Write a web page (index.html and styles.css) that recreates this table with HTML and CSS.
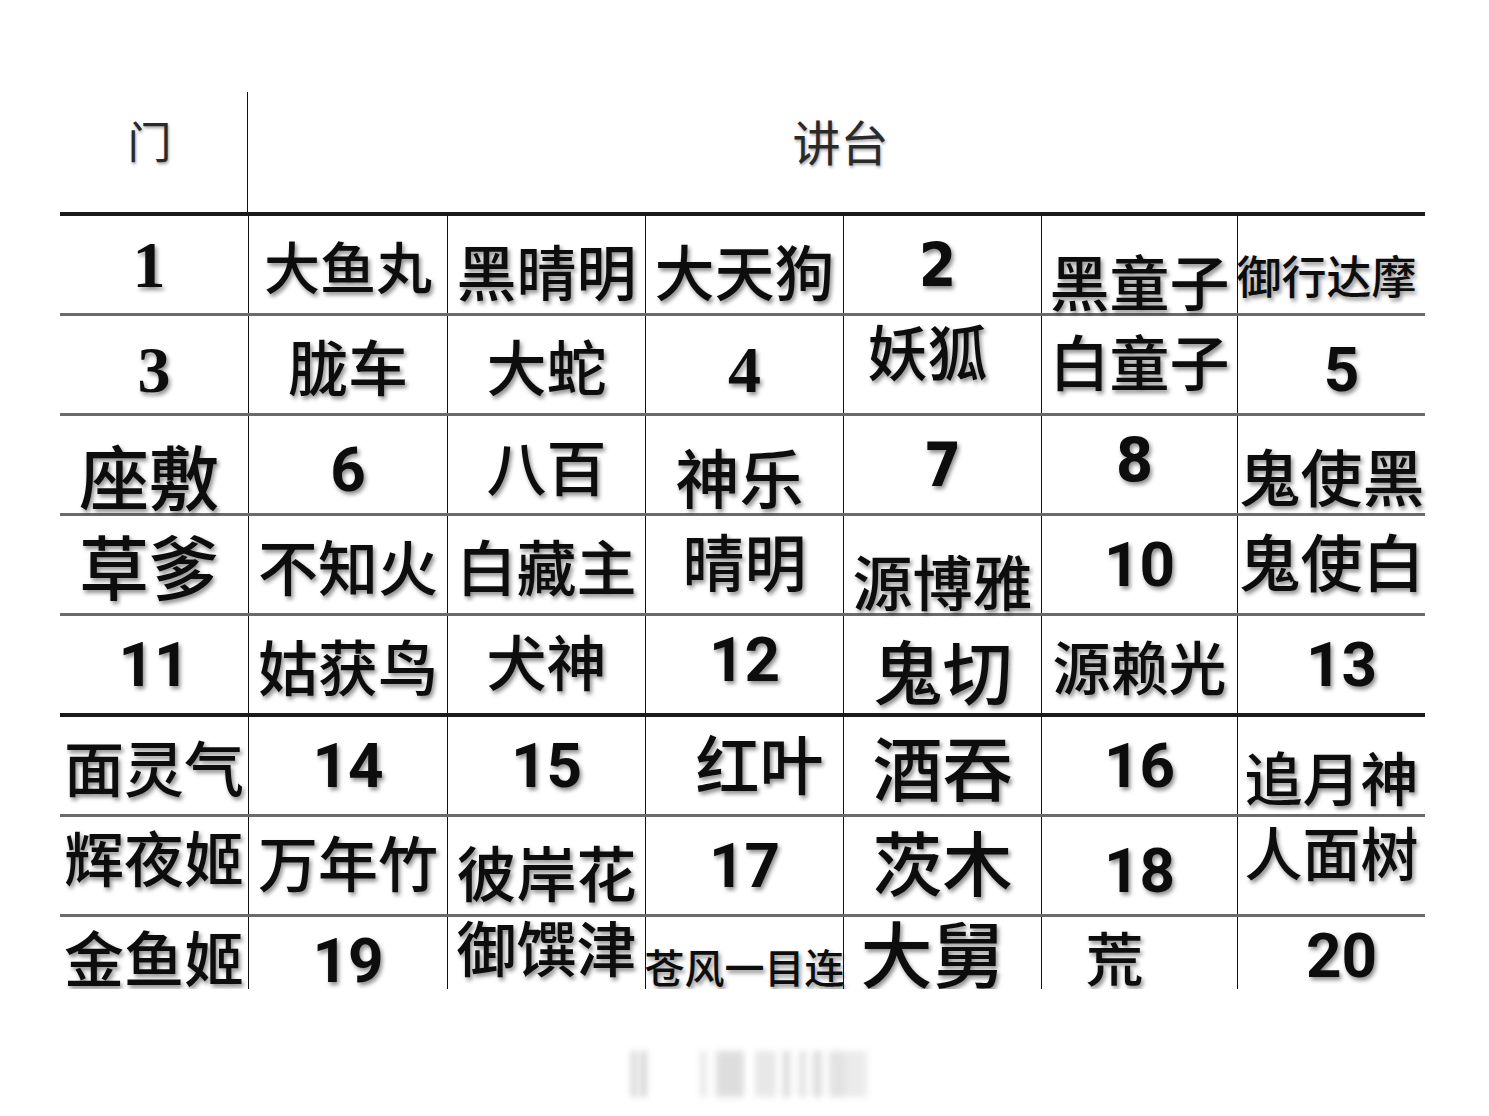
FILE: index.html
```html
<!DOCTYPE html>
<html lang="zh-CN">
<head>
<meta charset="utf-8">
<title>座位表</title>
<link rel="stylesheet" href="styles.css">
</head>
<body>
<div class="page">
  <div class="head">
    <div class="hc door"><span class="ht">门</span></div>
    <div class="hc stage"><span class="ht stage-t">讲台</span></div>
  </div>
  <div class="table">
    <div class="row thick">
      <div class="c"><span class="t ns l5">1</span></div>
      <div class="c"><span class="t z56">大鱼丸</span></div>
      <div class="c"><span class="t d5">黑晴明</span></div>
      <div class="c"><span class="t d5">大天狗</span></div>
      <div class="c"><span class="t nc l5">2</span></div>
      <div class="c"><span class="t d15">黑童子</span></div>
      <div class="c"><span class="t z45 d10 l5">御行达摩</span></div>
    </div>
    <div class="row">
      <div class="c"><span class="t ns d5">3</span></div>
      <div class="c"><span class="t">胧车</span></div>
      <div class="c"><span class="t">大蛇</span></div>
      <div class="c"><span class="t ns d5">4</span></div>
      <div class="c"><span class="t u15 l15">妖狐</span></div>
      <div class="c"><span class="t u5">白童子</span></div>
      <div class="c"><span class="t n d5 r10">5</span></div>
    </div>
    <div class="row">
      <div class="c"><span class="t z70 d10 l5">座敷</span></div>
      <div class="c"><span class="t n d5">6</span></div>
      <div class="c"><span class="t">八百</span></div>
      <div class="c"><span class="t z64 d10 l5">神乐</span></div>
      <div class="c"><span class="t nc">7</span></div>
      <div class="c"><span class="t nc u5 l5">8</span></div>
      <div class="c"><span class="t z62 d10">鬼使黑</span></div>
    </div>
    <div class="row">
      <div class="c"><span class="t z70 l5">草爹</span></div>
      <div class="c"><span class="t">不知火</span></div>
      <div class="c"><span class="t">白藏主</span></div>
      <div class="c"><span class="t z62 u5">晴明</span></div>
      <div class="c"><span class="t d15">源博雅</span></div>
      <div class="c"><span class="t n">10</span></div>
      <div class="c"><span class="t z62 u5">鬼使白</span></div>
    </div>
    <div class="row">
      <div class="c"><span class="t n">11</span></div>
      <div class="c"><span class="t">姑获鸟</span></div>
      <div class="c"><span class="t u5">犬神</span></div>
      <div class="c"><span class="t n u5">12</span></div>
      <div class="c"><span class="t z70 d5">鬼切</span></div>
      <div class="c"><span class="t z58">源赖光</span></div>
      <div class="c"><span class="t n r10">13</span></div>
    </div>
    <div class="row thick">
      <div class="c"><span class="t">面灵气</span></div>
      <div class="c"><span class="t n">14</span></div>
      <div class="c"><span class="t n">15</span></div>
      <div class="c"><span class="t z64 u5 r15">红叶</span></div>
      <div class="c"><span class="t z70">酒吞</span></div>
      <div class="c"><span class="t n">16</span></div>
      <div class="c"><span class="t z58 d10">追月神</span></div>
    </div>
    <div class="row">
      <div class="c"><span class="t u10">辉夜姬</span></div>
      <div class="c"><span class="t u5">万年竹</span></div>
      <div class="c"><span class="t d5">彼岸花</span></div>
      <div class="c"><span class="t n">17</span></div>
      <div class="c"><span class="t z70 u5">茨木</span></div>
      <div class="c"><span class="t n d5">18</span></div>
      <div class="c"><span class="t z58 u15">人面树</span></div>
    </div>
    <div class="row last">
      <div class="c"><span class="t u10">金鱼姬</span></div>
      <div class="c"><span class="t n u5">19</span></div>
      <div class="c"><span class="t u20">御馔津</span></div>
      <div class="c"><span class="t z40">苍风一目连</span></div>
      <div class="c"><span class="t z72 u15 l10">大舅</span></div>
      <div class="c"><span class="t z58 u10 l25">荒</span></div>
      <div class="c"><span class="t n u10 r10">20</span></div>
    </div>
  </div>
  <div class="mark-wrap"><div class="mark"></div></div>
</div>
</body>
</html>
```
FILE: styles.css
```css
html, body {
  margin: 0;
  padding: 0;
  background: #ffffff;
}

body {
  font-family: "Noto Sans CJK SC", "Noto Sans", sans-serif;
  color: #111;
}

.page {
  width: 1489px;
  height: 1116px;
  padding: 92px 0 0 60px;
  box-sizing: border-box;
  overflow: hidden;
}

.head {
  display: grid;
  grid-template-columns: 188px 1177px;
  height: 120px;
}

.hc {
  display: flex;
  align-items: center;
  justify-content: center;
}

.door {
  border-right: 1px solid #111;
}

.ht {
  font-size: 44px;
  line-height: 1;
  color: #2a2a2a;
  margin-bottom: 24px;
  margin-right: 8px;
  text-shadow: 1px 2px 3px rgba(0, 0, 0, 0.35);
}

.stage-t {
  font-size: 48px;
  margin-right: 0;
  margin-left: 8px;
}

.table {
  width: 1365px;
}

.row {
  display: grid;
  grid-template-columns: 188px 199px 198px 198px 198px 196px 188px;
  height: 100px;
  box-sizing: border-box;
  border-top: 3px solid #6a6a6a;
}

.row.thick {
  border-top: 4px solid #1a1a1a;
  height: 101px;
}

.row.last {
  height: 75px;
  overflow: hidden;
  align-items: start;
}

.row.last .c {
  height: 97px;
}

.c {
  display: flex;
  align-items: center;
  justify-content: center;
  min-width: 0;
  overflow: visible;
}

.c + .c {
  border-left: 1px solid #111;
}

.t {
  font-size: 60px;
  font-weight: 500;
  line-height: 1;
  white-space: nowrap;
  color: #0d0d0d;
  text-shadow: 2px 3px 4px rgba(0, 0, 0, 0.45);
}

/* sizes */
.z40 { font-size: 40px; }
.z45 { font-size: 45px; }
.z56 { font-size: 56px; }
.z58 { font-size: 58px; }
.z62 { font-size: 62px; }
.z64 { font-size: 64px; }
.z70 { font-size: 70px; }
.z72 { font-size: 72px; }

/* numbers */
.n {
  font-family: Roboto, "Liberation Sans", sans-serif;
  font-weight: 700;
  font-size: 62px;
}

.ns {
  font-family: "Liberation Serif", serif;
  font-weight: 700;
  font-size: 66px;
}

.nc {
  font-family: "DejaVu Sans Condensed", "DejaVu Sans", sans-serif;
  font-weight: 700;
  font-size: 60px;
}

/* nudges inside a centred cell */
.u5 { margin-bottom: 10px; }
.u10 { margin-bottom: 20px; }
.u15 { margin-bottom: 30px; }
.u20 { margin-bottom: 40px; }
.d5 { margin-top: 10px; }
.d10 { margin-top: 20px; }
.d15 { margin-top: 30px; }
.l5 { margin-right: 10px; }
.l10 { margin-right: 20px; }
.l15 { margin-right: 30px; }
.l25 { margin-right: 50px; }
.r10 { margin-left: 20px; }
.r15 { margin-left: 30px; }

/* blurred watermark */
.mark-wrap {
  display: flex;
  justify-content: center;
  width: 1365px;
  margin-top: 62px;
}

.mark {
  width: 255px;
  height: 46px;
  filter: blur(3px);
  opacity: 0.85;
  background:
    linear-gradient(90deg,
      transparent 0, transparent 16px,
      #c9c9c9 16px, #c9c9c9 21px,
      transparent 21px, transparent 25px,
      #d0d0d0 25px, #d0d0d0 32px,
      transparent 32px, transparent 85px,
      #e6e6e6 85px, #e6e6e6 92px,
      transparent 92px, transparent 101px,
      #d8d8d8 101px, #d8d8d8 129px,
      transparent 129px, transparent 140px,
      #e4e4e4 140px, #e4e4e4 161px,
      transparent 161px, transparent 168px,
      #d4d4d4 168px, #d4d4d4 175px,
      transparent 175px, transparent 184px,
      #dcdcdc 184px, #dcdcdc 191px,
      transparent 191px, transparent 198px,
      #d8d8d8 198px, #d8d8d8 207px,
      transparent 207px, transparent 214px,
      #dedede 214px, #dedede 230px,
      #e8e8e8 230px, #e8e8e8 252px,
      transparent 252px);
}
```
